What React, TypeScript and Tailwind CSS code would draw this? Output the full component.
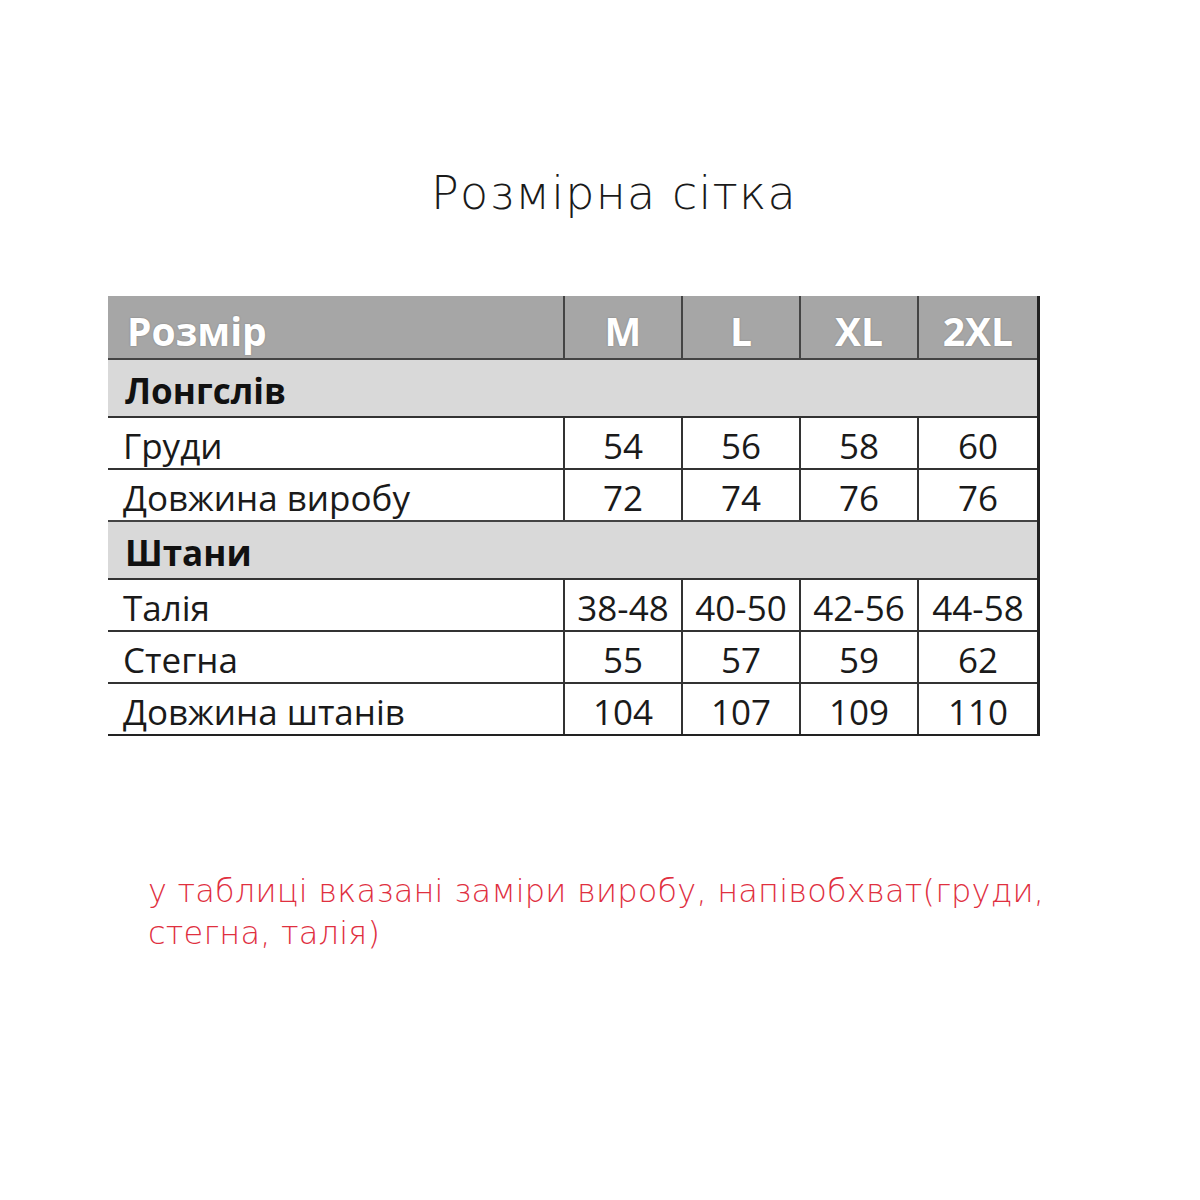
const sizes = ['M', 'L', 'XL', '2XL']

type Row = { label: string; values: string[] }

const sections: { title: string; rows: Row[] }[] = [
  {
    title: 'Лонгслів',
    rows: [
      { label: 'Груди', values: ['54', '56', '58', '60'] },
      { label: 'Довжина виробу', values: ['72', '74', '76', '76'] },
    ],
  },
  {
    title: 'Штани',
    rows: [
      { label: 'Талія', values: ['38-48', '40-50', '42-56', '44-58'] },
      { label: 'Стегна', values: ['55', '57', '59', '62'] },
      { label: 'Довжина штанів', values: ['104', '107', '109', '110'] },
    ],
  },
]

const cols = 'grid grid-cols-[457px_118px_118px_118px_118px]'

export default function App() {
  return (
    <div className="h-[1200px] w-[1200px] bg-white font-['Open_Sans',sans-serif]">
      <h1 className="pt-[164px] pl-[431px] font-['DejaVu_Sans',sans-serif] text-[46px] font-extralight leading-[58px] tracking-[1.2px] text-[#1a1a1a]">
        Розмірна сітка
      </h1>

      {/* size table */}
      <div className="ml-[108px] mt-[74px] w-[932px] border-r-[3px] border-b-2 border-[#222]">
        <div className={`${cols} h-[62px] bg-[#a6a6a6] text-[39px] leading-none font-bold text-white [text-shadow:0_0_2px_rgba(0,0,0,0.25)]`}>
          <div className="flex items-center border-r-2 border-[#444] pt-[6px] pl-[19px]">Розмір</div>
          {sizes.map((s, i) => (
            <div key={s} className={`flex items-center justify-center pt-[6px] ${i < 3 ? 'border-r-2 border-[#444]' : ''}`}>
              {s}
            </div>
          ))}
        </div>

        {sections.map((sec) => (
          <div key={sec.title}>
            <div className="flex h-[58px] items-center border-t-2 border-[#444] bg-[#d9d9d9] pt-[4px] pl-[17px] text-[35px] leading-none font-bold text-[#111]">
              {sec.title}
            </div>
            {sec.rows.map((r) => (
              <div key={r.label} className={`${cols} h-[52px] border-t-2 border-[#333] text-[35px] leading-none text-[#1a1a1a]`}>
                <div className="flex items-center border-r-2 border-[#333] pt-[4px] pl-[15px]">{r.label}</div>
                {r.values.map((v, i) => (
                  <div key={i} className={`flex items-center justify-center pt-[4px] ${i < 3 ? 'border-r-2 border-[#333]' : ''}`}>
                    {v}
                  </div>
                ))}
              </div>
            ))}
          </div>
        ))}
      </div>

      <p className="mt-[134px] ml-[148px] w-[920px] font-['DejaVu_Sans',sans-serif] text-[32px] font-extralight leading-[42px] tracking-[0.2px] text-[#e0303f]">
        у таблиці вказані заміри виробу, напівобхват(груди, стегна, талія)
      </p>
    </div>
  )
}
